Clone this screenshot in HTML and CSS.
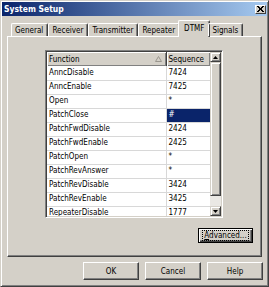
FILE: index.html
```html
<!DOCTYPE html>
<html lang="en">
<head>
  <meta charset="UTF-8">
  <title>System Setup</title>
  <link rel="stylesheet" href="styles.css">
</head>
<body>

<div class="window">
  <div class="titlebar">
    <span class="title">System Setup</span>
    <span class="close">
      <svg width="7" height="6" viewBox="0 0 7 6"><path d="M0 0 L6 6 M1 0 L7 6 M6 0 L0 6 M7 0 L1 6" stroke="#000" stroke-width="1"/></svg>
    </span>
  </div>

  <div class="tabs">
    <div class="tab">General</div>
    <div class="tab">Receiver</div>
    <div class="tab">Transmitter</div>
    <div class="tab">Repeater</div>
    <div class="tab active">DTMF</div>
    <div class="tab">Signals</div>
  </div>

  <div class="panel">
    <div class="list">
      <div class="grid">
        <table>
          <thead>
            <tr>
              <th class="col-func">Function
                <svg class="sort" width="7" height="6" viewBox="0 0 7 6"><path d="M3.5 0.5 L0.5 5.5 L6.5 5.5 Z" fill="none" stroke="#9a968e"/></svg>
              </th>
              <th class="col-seq">Sequence</th>
            </tr>
          </thead>
          <tbody>
            <tr><td>AnncDisable</td><td>7424</td></tr>
            <tr><td>AnncEnable</td><td>7425</td></tr>
            <tr><td>Open</td><td>*</td></tr>
            <tr><td>PatchClose</td><td class="selected">#</td></tr>
            <tr><td>PatchFwdDisable</td><td>2424</td></tr>
            <tr><td>PatchFwdEnable</td><td>2425</td></tr>
            <tr><td>PatchOpen</td><td>*</td></tr>
            <tr><td>PatchRevAnswer</td><td>*</td></tr>
            <tr><td>PatchRevDisable</td><td>3424</td></tr>
            <tr><td>PatchRevEnable</td><td>3425</td></tr>
            <tr><td>RepeaterDisable</td><td>1777</td></tr>
          </tbody>
        </table>
      </div>
      <div class="scrollbar">
        <div class="arrow">
          <svg width="5" height="3" viewBox="0 0 5 3"><path d="M2.5 0 L5 3 L0 3 Z" fill="#000"/></svg>
        </div>
        <div class="thumb"></div>
        <div class="track"></div>
        <div class="arrow">
          <svg width="5" height="3" viewBox="0 0 5 3"><path d="M0 0 L5 0 L2.5 3 Z" fill="#000"/></svg>
        </div>
      </div>
    </div>
    <button class="btn default"><span class="focus"><u>A</u>dvanced...</span></button>
  </div>

  <div class="buttons">
    <button class="btn">OK</button>
    <button class="btn">Cancel</button>
    <button class="btn">Help</button>
  </div>
</div>

</body>
</html>
```

FILE: styles.css
```css
body {
  margin: 0;
  background: #d4d0c8;
  font-family: 'DejaVu Sans Condensed', 'DejaVu Sans', sans-serif;
  font-size: 8px;
  color: #000;
}
.window {
  width: 269px;
  height: 287px;
  box-sizing: border-box;
  background: #d4d0c8;
  border: 1px solid;
  border-color: #d4d0c8 #404040 #404040 #d4d0c8;
  box-shadow: inset 1px 1px #fff, inset -1px -1px #808080;
  padding: 1px;
  display: flex;
  flex-direction: column;
}
.titlebar {
  height: 14px;
  background: linear-gradient(to right, #0a246a, #a6caf0);
  display: flex;
  align-items: center;
  justify-content: space-between;
  padding: 0 1px 0 2px;
}
.title {
  color: #fff;
  font-weight: bold;
  font-size: 8.5px;
}
.close {
  width: 11px;
  height: 9px;
  box-sizing: border-box;
  background: #d4d0c8;
  border: 1px solid;
  border-color: #fff #404040 #404040 #fff;
  display: flex;
  align-items: center;
  justify-content: center;
}
.tabs {
  height: 20px;
  display: flex;
  align-items: flex-end;
  padding-left: 9px;
  position: relative;
  z-index: 1;
}
.tab {
  height: 13px;
  box-sizing: border-box;
  padding: 1px 4px 0 3px;
  border: 1px solid;
  border-bottom: none;
  border-color: #fff #404040 #fff #fff;
  border-radius: 2px 2px 0 0;
  box-shadow: inset -1px 0 #808080;
  line-height: 11px;
}
.tab.active {
  height: 17px;
  margin: 0 -2px -1px;
  padding: 2px 5px 0;
  background: #d4d0c8;
}
.panel {
  height: 221px;
  margin: 0 5px;
  box-sizing: border-box;
  border: 1px solid;
  border-color: #fff #404040 #404040 #fff;
  box-shadow: inset -1px -1px #808080;
  padding: 13px 8px 0 37px;
  display: flex;
  flex-direction: column;
}
.list {
  width: 178px;
  height: 168px;
  box-sizing: border-box;
  border: 1px solid;
  border-color: #808080 #fff #fff #808080;
  box-shadow: inset 1px 1px #404040, inset -1px -1px #d4d0c8;
  padding: 1px;
  display: flex;
  background: #fff;
}
.grid {
  flex: 1;
  overflow: hidden;
}
table {
  border-collapse: collapse;
  width: 163px;
  table-layout: fixed;
}
th {
  height: 14px;
  box-sizing: border-box;
  padding: 0 2px;
  background: #d4d0c8;
  font-weight: normal;
  text-align: left;
  border-right: 1px solid #404040;
  box-shadow: inset 1px 1px #fff, inset -1px -1px #808080;
  position: relative;
}
.col-func {
  width: 119px;
}
.col-seq {
  width: 44px;
}
.sort {
  position: absolute;
  right: 4px;
  top: 4px;
}
td {
  height: 14px;
  box-sizing: border-box;
  padding: 0 2px;
  border-right: 1px solid #d8d8d8;
  border-bottom: 1px solid #d8d8d8;
  white-space: nowrap;
  line-height: 12px;
}
td.selected {
  background: #0a246a;
  color: #fff;
}
.scrollbar {
  width: 11px;
  display: flex;
  flex-direction: column;
}
.arrow {
  height: 10px;
  box-sizing: border-box;
  background: #d4d0c8;
  border: 1px solid;
  border-color: #d4d0c8 #404040 #404040 #d4d0c8;
  box-shadow: inset 1px 1px #fff, inset -1px -1px #808080;
  display: flex;
  align-items: center;
  justify-content: center;
}
.thumb {
  height: 134px;
  box-sizing: border-box;
  background: #d4d0c8;
  border: 1px solid;
  border-color: #d4d0c8 #404040 #404040 #d4d0c8;
  box-shadow: inset 1px 1px #fff, inset -1px -1px #808080;
}
.track {
  flex: 1;
  background: #eae8e4;
}
.btn {
  font-family: inherit;
  font-size: 8px;
  color: #000;
  background: #d4d0c8;
  border: 1px solid;
  border-color: #fff #404040 #404040 #fff;
  box-shadow: inset -1px -1px #808080;
  padding: 0;
  height: 18px;
  width: 56px;
}
.btn.default {
  align-self: flex-end;
  margin-top: 10px;
  width: 55px;
  height: 15px;
  border-color: #000;
  box-shadow: inset 1px 1px #fff, inset -1px -1px #404040, inset -2px -2px #808080;
}
.focus {
  outline: 1px dotted #000;
  padding: 0 1px;
}
.buttons {
  display: flex;
  justify-content: flex-end;
  gap: 6px;
  margin-top: 5px;
  padding-right: 4px;
}
```
